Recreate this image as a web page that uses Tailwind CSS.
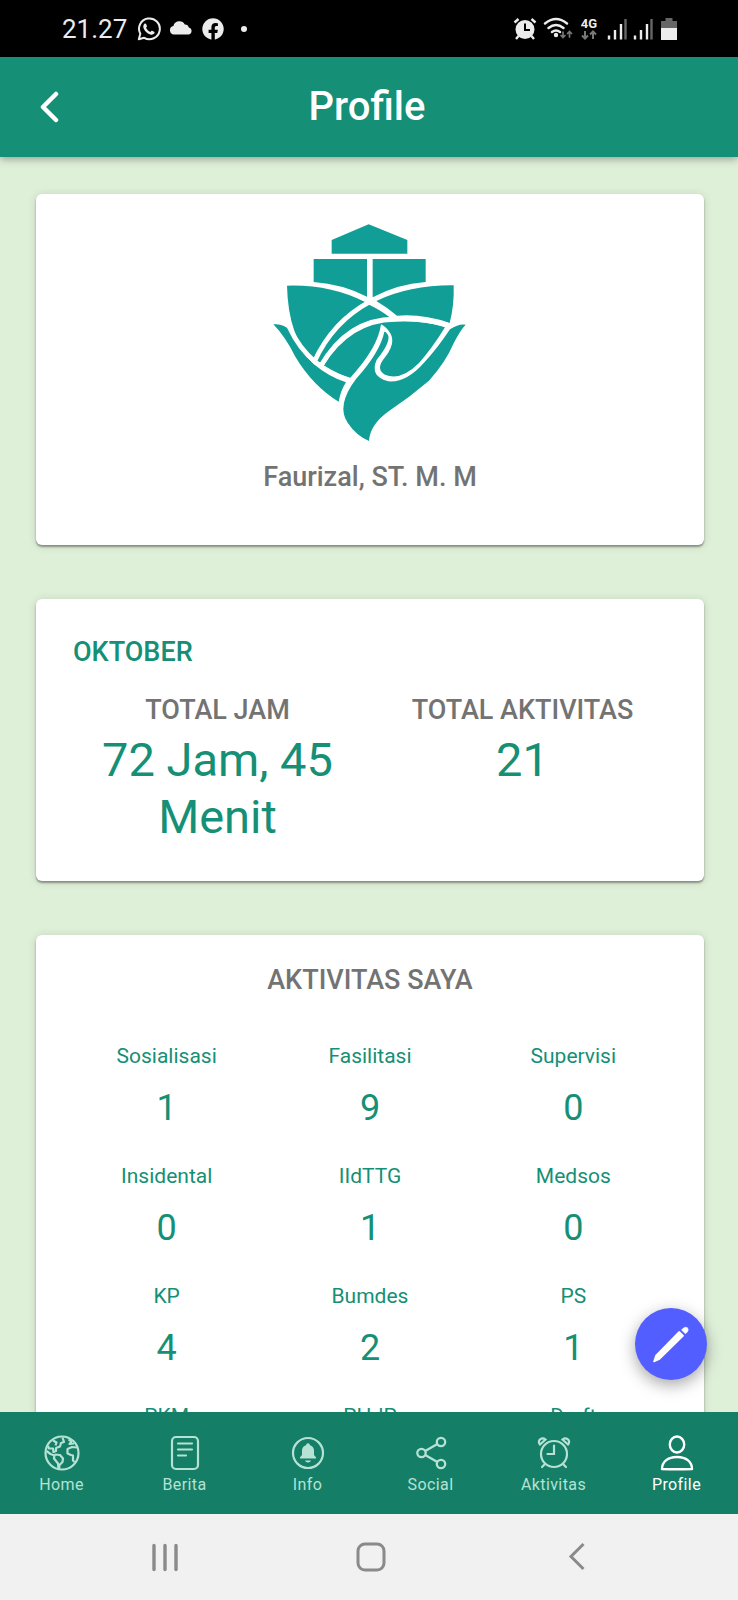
<!DOCTYPE html>
<html lang="id">
<head>
  <meta charset="UTF-8">
  <meta name="viewport" content="width=device-width, initial-scale=1.0">
  <title>Profile</title>
  <script src="https://cdn.jsdelivr.net/npm/@tailwindcss/browser@4"></script>
</head>
<body class="h-screen flex flex-col overflow-hidden bg-[#dff0d9] font-['Roboto',sans-serif] text-[#147e66]">

  <!-- Status bar -->
  <div class="flex h-[57px] shrink-0 items-center justify-between bg-black pl-[62px] pr-[61px] text-[#ececec]">
    <div class="flex items-center">
      <span class="text-[26px] leading-9">21.27</span>
      <svg class="ml-2.5 size-6" viewBox="0 0 24 24" fill="none" stroke="currentColor" stroke-width="2">
        <path d="M1.8 22.2l1.5-5.4A10.4 10.4 0 1 1 7.2 20.8z" stroke-linejoin="round"/>
        <path d="M7.4 6.8c.6-.6 1.4-.5 1.7.2l.8 1.9c.2.5-.1.9-.9 1.8 1 2 2.3 3.2 4.4 4.2.8-1 1.2-1.3 1.7-1.1l2 1c.6.3.5 1.2.1 1.800-.8 1.100-2.400 1.500-4 .9-3.300-1.200-5.300-3.200-6.500-6-.7-1.800-.5-3.500.7-4.700z" fill="currentColor" stroke="none"/>
      </svg>
      <svg class="ml-2 h-6 w-6" viewBox="0 0 24 24" fill="currentColor">
        <path d="M5 17.500a4.300 4.300 0 0 1-.6-8.500A6.200 6.200 0 0 1 15.800 7.400a4 4 0 0 1 4 3.100 3.600 3.600 0 0 1 0 7z"/>
      </svg>
      <svg class="ml-2 h-6 w-6" viewBox="0 0 24 24">
        <circle cx="12" cy="12" r="10.7" fill="currentColor"/>
        <path d="M10.400 24v-8H7.600v-3.300h2.800v-2.400c0-2.800 1.600-4.300 4.200-4.300l2.300.2v2.800h-1.400c-1.300 0-1.700.8-1.700 1.600v2.100h3l-.5 3.300h-2.500v8z" fill="#000"/>
      </svg>
      <span class="ml-4 size-1.5 rounded-full bg-current"></span>
    </div>
    <div class="flex items-center">
      <svg class="h-6 w-6" viewBox="0 0 24 24">
        <circle cx="12" cy="12.500" r="9.500" fill="currentColor"/>
        <path d="M5.500 19l-2.500 3M18.500 19l2.500 3M1.500 5.500l4-3.500M22.500 5.500l-4-3.500" stroke="currentColor" stroke-width="2.400"/>
        <path d="M12 6.500v6.500h5" fill="none" stroke="#000" stroke-width="2"/>
      </svg>
      <svg class="ml-1.5 h-6 w-[30px]" viewBox="0 0 30 24" fill="none" stroke="currentColor" stroke-width="2.400" stroke-linecap="round">
        <path d="M2 6.500q11-9 22 0M5.500 11q7.500-6 15 0M9 15q4-3 8 0"/>
        <circle cx="13" cy="18" r="1" fill="currentColor"/>
        <path d="M20 15v5M18 18.500l2 2 2-2M26.500 20v-5M24.500 16.500l2-2 2 2" stroke="#777" stroke-width="1.700"/>
      </svg>
      <div class="ml-1.5 flex w-5 flex-col items-center">
        <span class="text-[13px] leading-3 font-bold">4G</span>
        <svg class="h-[10px] w-4" viewBox="0 0 16 10" fill="none" stroke="#777" stroke-width="2">
          <path d="M4 1v7M1 5.500l3 3 3-3M12 9V2M9 4.500l3-3 3 3"/>
        </svg>
      </div>
      <svg class="ml-2 h-6 w-5" viewBox="0 0 20 24" stroke-width="2.400" stroke="currentColor">
        <path d="M2 22.500v-4M8 22.500V13M14 22.500V7"/><path d="M18.500 22.500V2" stroke="#666"/>
      </svg>
      <svg class="ml-1.5 h-6 w-5" viewBox="0 0 20 24" stroke-width="2.400" stroke="currentColor">
        <path d="M2 22.500v-4M8 22.500V13M14 22.500V7"/><path d="M18.500 22.500V2" stroke="#666"/>
      </svg>
      <svg class="ml-2 h-6 w-4" viewBox="0 0 16 24">
        <path d="M4.500 1h7v3H16v7H0V4h4.500z" fill="#666"/><path d="M0 11h16v12H0z" fill="currentColor"/>
      </svg>
    </div>
  </div>

  <!-- Header -->
  <header class="relative z-10 grid h-[100px] shrink-0 grid-cols-[100px_1fr_100px] items-center bg-[#158f75] text-white shadow-[0_2px_8px_rgba(0,0,0,0.35)]">
    <button type="button" aria-label="Kembali" class="flex h-full items-center justify-center">
      <svg class="h-8 w-5" viewBox="0 0 20 32" fill="none" stroke="currentColor" stroke-width="4.500" stroke-linecap="round" stroke-linejoin="round"><path d="M16 3L3 16l13 13"/></svg>
    </button>
    <h1 class="pr-1 text-center text-[40px] leading-12 font-medium">Profile</h1>
  </header>

  <!-- Konten -->
  <main class="flex min-h-0 flex-1 flex-col gap-[54px] overflow-y-auto pt-[37px] pr-[34px] pb-9 pl-9 [scrollbar-width:none]">
    <section class="flex shrink-0 flex-col items-center rounded-md bg-white pt-[26px] pb-[50px] shadow-[0_2px_2px_rgba(0,0,0,0.35),0_1px_8px_rgba(0,0,0,0.15)]">
      <svg class="h-[227px] w-[200px]" viewBox="30 30 600 681" role="img" aria-label="Logo">
        <g fill="#119e96">
          <path d="M215 90L326 43l116 47v41H215z"/>
          <path d="M161 147h160v113q-75-38-160-44z"/>
          <path d="M338 147h159v69q-85 6-159 46z"/>
          <path d="M81 227q130-4 236 50l12 8q35 17 60 37-125 18-207 136l-22-9Q85 385 81 227z"/>
          <path d="M349 273q100-48 232-47 2 60-12 113-80-28-158-22-30-25-62-44z"/>
          <path d="M191 467q80-130 213-132 80-5 151 17-40 65-78 107-55 55-102 35-28-15-4-47 38-45 20-77-12-20-28-27-9 70-92 160-40-9-80-36z"/>
          <path d="M40 343q30-4 51 19 30 61 69 99 45 38 98 56-16 24-22 58-78-48-130-135-30-60-66-97z"/>
          <path d="M617 344q-20-4-47 14-40 60-76 98-55 63-109 58-57-15-35-65 40-49 35-72-7-13-12-12-12 60-85 142-60 80-25 131 25 38 64 55 3-50 60-90 60-40 120-91 50-55 74-112 20-40 36-56z"/>
        </g>
        <g fill="none" stroke="#fff" stroke-width="14">
          <path d="M330 275Q218 335 163 455"/>
          <path d="M182 468Q265 325 408 327q80-4 155 18"/>
          <path d="M88 352q30 65 78 104 45 35 98 53"/>
        </g>
      </svg>
      <h2 class="mt-3 text-[27px] leading-9 font-medium text-[#737373]">Faurizal, ST. M. M</h2>
    </section>

    <section class="shrink-0 rounded-md bg-white px-[29px] pt-[35px] pb-9 shadow-[0_2px_2px_rgba(0,0,0,0.35),0_1px_8px_rgba(0,0,0,0.15)]">
      <h2 class="px-2 text-[27px] leading-9 font-medium text-[#158f75]">OKTOBER</h2>
      <div class="mt-5 grid grid-cols-2 text-center">
        <div class="px-7">
          <h3 class="text-[27px] leading-[41px] font-medium text-[#737373]">TOTAL JAM</h3>
          <p class="text-[47px] leading-[57px] text-[#158f75]">72 Jam, 45 Menit</p>
        </div>
        <div>
          <h3 class="text-[27px] leading-[41px] font-medium text-[#737373]">TOTAL AKTIVITAS</h3>
          <p class="text-[47px] leading-[57px] text-[#158f75]">21</p>
        </div>
      </div>
    </section>

    <section class="shrink-0 rounded-md bg-white px-[29px] pt-[27px] pb-9 text-center shadow-[0_2px_2px_rgba(0,0,0,0.35),0_1px_8px_rgba(0,0,0,0.15)]">
      <h2 class="text-[27px] leading-9 font-medium text-[#737373]">AKTIVITAS SAYA</h2>
      <dl class="mt-11 grid grid-cols-3 gap-y-8 text-[#158f75]">
        <div><dt class="text-[21px] leading-7">Sosialisasi</dt><dd class="mt-4 text-4xl leading-11">1</dd></div>
        <div><dt class="text-[21px] leading-7">Fasilitasi</dt><dd class="mt-4 text-4xl leading-11">9</dd></div>
        <div><dt class="text-[21px] leading-7">Supervisi</dt><dd class="mt-4 text-4xl leading-11">0</dd></div>
        <div><dt class="text-[21px] leading-7">Insidental</dt><dd class="mt-4 text-4xl leading-11">0</dd></div>
        <div><dt class="text-[21px] leading-7">IIdTTG</dt><dd class="mt-4 text-4xl leading-11">1</dd></div>
        <div><dt class="text-[21px] leading-7">Medsos</dt><dd class="mt-4 text-4xl leading-11">0</dd></div>
        <div><dt class="text-[21px] leading-7">KP</dt><dd class="mt-4 text-4xl leading-11">4</dd></div>
        <div><dt class="text-[21px] leading-7">Bumdes</dt><dd class="mt-4 text-4xl leading-11">2</dd></div>
        <div><dt class="text-[21px] leading-7">PS</dt><dd class="mt-4 text-4xl leading-11">1</dd></div>
        <div><dt class="text-[21px] leading-7">PKM</dt><dd class="mt-4 text-4xl leading-11">0</dd></div>
        <div><dt class="text-[21px] leading-7">PHdP</dt><dd class="mt-4 text-4xl leading-11">0</dd></div>
        <div><dt class="text-[21px] leading-7">Draft</dt><dd class="mt-4 text-4xl leading-11">0</dd></div>
      </dl>
    </section>
  </main>

  <!-- Menu bawah -->
  <div class="relative shrink-0">
    <button type="button" aria-label="Tulis aktivitas" class="absolute right-[31px] bottom-full mb-8 flex size-[72px] items-center justify-center rounded-full bg-[#525eff] text-white shadow-[0_5px_16px_rgba(0,0,0,0.35)]">
      <svg class="size-10" viewBox="0 0 40 40" fill="currentColor">
        <path d="M3 37.500l2-6L28.200 7.800l4 4L8.500 35z" stroke="currentColor" stroke-width="1.600" stroke-linejoin="round"/>
        <path d="M30.500 6l2-2q2-1.500 4-.2 1.300 2 0 4l-2 2z" stroke="currentColor" stroke-width=".6"/>
      </svg>
    </button>
    <nav class="h-[102px] bg-[#147e66] pt-[21px]">
      <ul class="grid grid-cols-6 text-base leading-6 tracking-wide text-[#b5e2d4]">
        <li><a href="#" class="flex flex-col items-center">
          <svg class="size-10" viewBox="0 0 40 40" fill="none" stroke="currentColor" stroke-width="2.200" stroke-linejoin="round">
            <circle cx="20" cy="20" r="16.500"/>
            <path d="M6 13l1 2.500h4l.5 3.500 2.500-1 0-3 4-1.500 1-3.500 3-1-1.500-4.500M11 7.500l3.500 2-1 3M4.500 18l4 3 4 1.500M12.500 21.500l5.500.5 3 3.500-.5 3.500-3 3-.5 4M12.500 21.500l-.5 4 4 5 .5 6M35 14.500l-5-.5-4.500 2 0 4.500 3.500 1.500 2 .5v5l1.500 1.500M26.500 6.500l3 1.500-2 3 4.500-.5"/>
          </svg>Home</a></li>
        <li><a href="#" class="flex flex-col items-center">
          <svg class="size-10" viewBox="0 0 40 40" fill="none" stroke="currentColor" stroke-width="2.200">
            <rect x="7" y="4" width="26" height="32" rx="4"/>
            <path d="M13 10.500h14M13 16.500h14M13 22.500h8" stroke-linecap="round"/>
          </svg>Berita</a></li>
        <li><a href="#" class="flex flex-col items-center">
          <svg class="size-10" viewBox="0 0 40 40" fill="none" stroke="currentColor" stroke-width="2.200">
            <circle cx="20" cy="20" r="15"/>
            <path d="M12 25.500v-1.300l2-2.200v-4.500q0-4 4-5.300c.3-2.700 3.700-2.700 4 0q4 1.300 4 5.300V22l2 2.200v1.300zM17 27.500h6c-.6 2.600-5.400 2.600-6 0z" fill="currentColor" stroke="none"/>
          </svg>Info</a></li>
        <li><a href="#" class="flex flex-col items-center">
          <svg class="size-10" viewBox="0 0 40 40" fill="none" stroke="currentColor" stroke-width="2.300">
            <circle cx="10.500" cy="20" r="4.200"/><circle cx="30" cy="9" r="4.200"/><circle cx="30" cy="31" r="4.200"/>
            <path d="M14.200 18l12.200-7M14.200 22l12.200 7"/>
          </svg>Social</a></li>
        <li><a href="#" class="flex flex-col items-center">
          <svg class="size-10" viewBox="0 0 40 40" fill="none" stroke="currentColor" stroke-width="2.200" stroke-linecap="round">
            <circle cx="20" cy="21" r="13"/>
            <path d="M20 12.500V21h-6.500M11 31l-3 3M29 31l3 3M6 11.500c-3.500-4 2-8 5.500-5zM34 11.500c3.500-4-2-8-5.500-5z"/>
          </svg>Aktivitas</a></li>
        <li><a href="#" aria-current="page" class="flex flex-col items-center text-white">
          <svg class="size-10" viewBox="0 0 40 40" fill="none" stroke="currentColor" stroke-width="2.400" stroke-linejoin="round">
            <ellipse cx="20" cy="11.500" rx="7.200" ry="8"/>
            <path d="M5 36c0-7 5.500-12 15-12s15 5 15 12q-15 .4-30 0z"/>
          </svg>Profile</a></li>
      </ul>
    </nav>
  </div>

  <!-- Tombol sistem -->
  <div class="grid h-[86px] shrink-0 grid-cols-3 items-center bg-[#f1f1f1] pr-[58px] pl-[62px] text-[#8a8a8a]">
    <button type="button" aria-label="Aplikasi terbaru" class="flex justify-center">
      <svg class="h-8 w-8" viewBox="0 0 32 32" stroke="currentColor" stroke-width="3.400" stroke-linecap="round"><path d="M5 4.500v24M16 4.500v24M27 4.500v24"/></svg>
    </button>
    <button type="button" aria-label="Beranda" class="flex justify-center">
      <svg class="h-8 w-8" viewBox="0 0 32 32" fill="none" stroke="currentColor" stroke-width="3"><rect x="3" y="3" width="26" height="26" rx="7"/></svg>
    </button>
    <button type="button" aria-label="Kembali ke layar sebelumnya" class="flex justify-center">
      <svg class="h-8 w-8" viewBox="0 0 32 32" fill="none" stroke="currentColor" stroke-width="3"><path d="M22.500 3L10 15.500 22.500 28"/></svg>
    </button>
  </div>
</body>
</html>
